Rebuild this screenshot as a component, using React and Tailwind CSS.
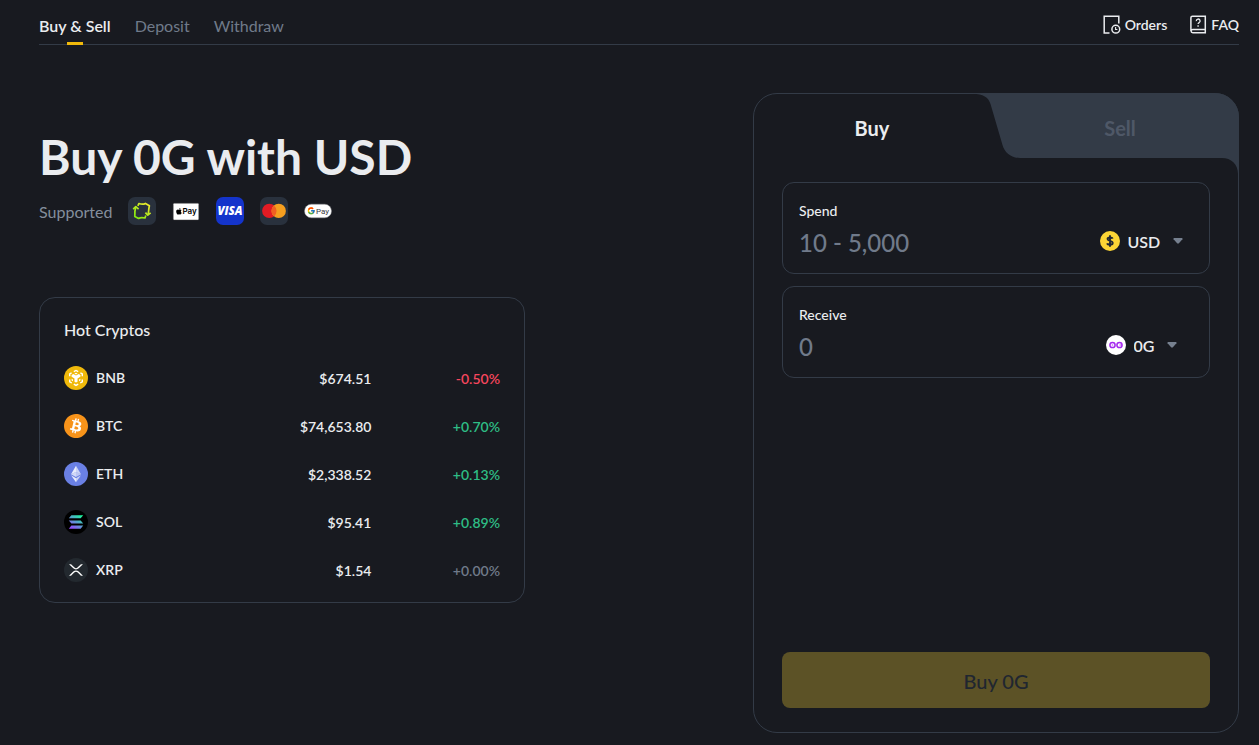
import React from 'react';
import { SiBitcoin } from 'react-icons/si';
import { FaApple } from 'react-icons/fa';
import { FcGoogle } from 'react-icons/fc';

function OrdersIcon() {
  return (
    <svg width="18" height="20" viewBox="0 0 18 20" fill="none" stroke="#EAECEF" strokeWidth="1.5" aria-hidden="true">
      <path d="M6.5 18H1.2V1.3H15.8V8.5" />
      <circle cx="12.8" cy="14.2" r="3.9" />
      <path d="M12.6 12V14.5H14.4" strokeWidth="1.1" />
    </svg>
  );
}

function FaqIcon() {
  return (
    <svg width="18" height="20" viewBox="0 0 18 20" fill="none" stroke="#EAECEF" strokeWidth="1.5" aria-hidden="true">
      <path d="M16.3 14.4H3.8A1.7 1.7 0 0 0 3.8 17.8H16.3V1.3H3.4A1.5 1.5 0 0 0 1.9 2.8V16" />
      <path d="M7.3 6.1A1.9 1.9 0 1 1 10.1 7.6C9.4 8 9.1 8.4 9.1 9.1" strokeWidth="1.3" />
      <path d="M9.1 10.3V11.7" strokeWidth="1.4" />
    </svg>
  );
}

function P2PIcon() {
  return (
    <svg width="28" height="28" viewBox="0 0 28 28" fill="none" role="img" aria-label="P2P">
      <defs>
        <linearGradient id="p2p" x1="20" y1="6" x2="8" y2="22" gradientUnits="userSpaceOnUse">
          <stop stopColor="#F2E92E" />
          <stop offset="1" stopColor="#7BE80E" />
        </linearGradient>
      </defs>
      <rect width="28" height="28" rx="7" fill="#29313D" />
      <g stroke="url(#p2p)" strokeWidth="1.7" strokeLinejoin="round">
        <path d="M9.8 8.8L11 6.5C13.5 7.5 16 7.2 17.4 6.4L21.4 8.8C20.5 12 20.8 15 20 17.8" />
        <path d="M17.4 15.6L19.8 18.2L22.6 15.8" />
        <path d="M17.8 18.6L17 21C14.5 20.4 12 20.6 10.6 21.4L6.8 19.4C6.6 16 6.8 12.8 7.8 10" />
        <path d="M5.2 12.2L7.8 9.6L10.6 12.2" />
      </g>
    </svg>
  );
}

function ApplePayIcon() {
  return (
    <svg width="28" height="28" viewBox="0 0 28 28" role="img" aria-label="Apple Pay">
      <rect x="1.2" y="6.2" width="25.6" height="16.8" rx="1" fill="#fff" stroke="#3b3b3b" strokeWidth="0.5" />
      <FaApple x="3.2" y="10.4" size="7.6" color="#000" />
      <text x="10.4" y="17" fontSize="8" fontWeight="600" fill="#000" fontFamily="Inter, sans-serif">Pay</text>
    </svg>
  );
}

function VisaIcon() {
  return (
    <svg width="28" height="28" viewBox="0 0 28 28" role="img" aria-label="Visa">
      <rect width="28" height="28" rx="7" fill="#1434CB" />
      <text x="14" y="18.2" textAnchor="middle" fontSize="11.5" fontWeight="800" fontStyle="italic" fill="#fff" fontFamily="'Open Sans', sans-serif">VISA</text>
    </svg>
  );
}

function MastercardIcon() {
  return (
    <svg width="28" height="28" viewBox="0 0 28 28" role="img" aria-label="Mastercard">
      <rect width="28" height="28" rx="7" fill="#29313D" />
      <circle cx="9.3" cy="13.9" r="7.2" fill="#E21B24" />
      <circle cx="18.7" cy="13.9" r="7.2" fill="#F59E1F" />
      <path d="M14 8.4a7.2 7.2 0 0 1 0 11a7.2 7.2 0 0 1 0-11Z" fill="#F16022" />
    </svg>
  );
}

function GooglePayIcon() {
  return (
    <svg width="28" height="28" viewBox="0 0 28 28" role="img" aria-label="Google Pay">
      <rect x="0.5" y="7.2" width="27" height="13.6" rx="6.8" fill="#fff" stroke="#8b8d91" strokeWidth="0.5" />
      <FcGoogle x="3" y="9.6" size="8.4" />
      <text x="12" y="16.8" fontSize="8" fontWeight="400" fill="#3c4043" fontFamily="Roboto, sans-serif">Pay</text>
    </svg>
  );
}

function BnbIcon() {
  return (
    <svg width="24" height="24" viewBox="0 0 24 24" fill="none" aria-hidden="true">
      <circle cx="12" cy="12" r="12" fill="#F0B90B" />
      <path d="M9.8 5.7L12 4.5L14.2 5.7M16.4 6.9L18.3 8V10.2M18.3 13.4V15.8L16.2 17M14.2 18.2L12 19.4L9.8 18.2M7.8 17L5.7 15.8V13.4M5.7 10.2V8L7.6 6.9" stroke="#fff" strokeWidth="1.4" />
      <path d="M7.6 9L9.3 8.1L12 9.6L14.7 8.1L16.4 9V10.8L13.5 12.5V15.7L12 16.6L10.5 15.7V12.5L7.6 10.8Z" fill="#fff" />
      <path d="M10.4 7.6L12 6.7L13.6 7.6L12 8.5ZM7.6 12.7L9 13.5V15.2L7.6 14.4ZM16.4 12.7L15 13.5V15.2L16.4 14.4Z" fill="#fff" />
    </svg>
  );
}

function BtcIcon() {
  return (
    <svg width="24" height="24" viewBox="0 0 24 24" aria-hidden="true">
      <circle cx="12" cy="12" r="11" fill="#fff" />
      <SiBitcoin size="24" color="#F7931A" />
    </svg>
  );
}

function EthIcon() {
  return (
    <svg width="24" height="24" viewBox="0 0 24 24" aria-hidden="true">
      <circle cx="12" cy="12" r="12" fill="#6A80E4" />
      <path d="M12 3.8V9.9L7 12.2Z" fill="#fff" fillOpacity="0.85" />
      <path d="M12 3.8V9.9L17 12.2Z" fill="#fff" fillOpacity="0.65" />
      <path d="M12 9.9V15.1L7 12.2Z" fill="#fff" fillOpacity="0.7" />
      <path d="M12 9.9V15.1L17 12.2Z" fill="#fff" fillOpacity="0.55" />
      <path d="M12 16.2V20.2L7 13.3Z" fill="#fff" fillOpacity="0.85" />
      <path d="M12 16.2V20.2L17 13.3Z" fill="#fff" fillOpacity="0.65" />
    </svg>
  );
}

function SolIcon() {
  return (
    <svg width="24" height="24" viewBox="0 0 24 24" aria-hidden="true">
      <defs>
        <linearGradient id="sol" x1="17" y1="5" x2="7" y2="19" gradientUnits="userSpaceOnUse">
          <stop stopColor="#19FB9B" />
          <stop offset="0.5" stopColor="#5B9BD0" />
          <stop offset="1" stopColor="#9945FF" />
        </linearGradient>
      </defs>
      <circle cx="12" cy="12" r="12" fill="#000" />
      <path d="M7.4 5.2H19.2L16.7 8.3H4.8ZM4.8 10.4H16.7L19.2 13.5H7.4ZM7.4 15.6H19.2L16.7 18.7H4.8Z" fill="url(#sol)" />
    </svg>
  );
}

function XrpIcon() {
  return (
    <svg width="24" height="24" viewBox="0 0 24 24" aria-hidden="true">
      <circle cx="12" cy="12" r="12" fill="#23292F" />
      <g transform="translate(5 6.2) scale(0.0273)" fill="#fff">
        <path d="M437 0h74L357 152.48c-55.77 55.19-146.19 55.19-202 0L.94 0H75l117 115.83a91.11 91.11 0 0 0 127.91 0Z" />
        <path d="M74.05 424H0l155-153.42c55.77-55.19 146.19-55.19 202 0L512 424h-74L320 307.23a91.11 91.11 0 0 0-127.91 0Z" />
      </g>
    </svg>
  );
}

function UsdIcon() {
  return (
    <svg width="20" height="20" viewBox="0 0 20 20" fill="none" aria-hidden="true">
      <circle cx="10" cy="10" r="10" fill="#FCD535" />
      <path d="M12.7 7.6C12.3 6.4 7.5 5.7 7.5 8.1C7.5 10.4 12.7 9.2 12.7 11.9C12.7 14.3 7.6 14 7.2 12.2M10 4.3V15.7" stroke="#202630" strokeWidth="1.9" />
    </svg>
  );
}

function ZeroGIcon() {
  return (
    <svg width="20" height="20" viewBox="0 0 20 20" fill="none" aria-hidden="true">
      <circle cx="10" cy="10" r="10" fill="#fff" />
      <g stroke="#A428EE" strokeWidth="1.5">
        <circle cx="6.5" cy="10" r="2.6" />
        <circle cx="13.5" cy="10" r="2.6" />
        <path d="M5.8 10H7.2M13.5 10H16" strokeWidth="0.9" />
      </g>
    </svg>
  );
}

const COINS = [
  { name: 'BNB', price: '$674.51', change: '-0.50%', tone: 'text-[#F6465D]', Icon: BnbIcon },
  { name: 'BTC', price: '$74,653.80', change: '+0.70%', tone: 'text-[#2EBD85]', Icon: BtcIcon },
  { name: 'ETH', price: '$2,338.52', change: '+0.13%', tone: 'text-[#2EBD85]', Icon: EthIcon },
  { name: 'SOL', price: '$95.41', change: '+0.89%', tone: 'text-[#2EBD85]', Icon: SolIcon },
  { name: 'XRP', price: '$1.54', change: '+0.00%', tone: 'text-[#707A8A]', Icon: XrpIcon },
];

function Header() {
  return (
    <header className="flex justify-between border-b border-[#333B47]">
      <nav className="flex gap-6 text-base">
        <a href="#buy-sell" aria-current="page" className="relative flex h-11 items-center pt-2 font-semibold">
          Buy &amp; Sell
          <span className="absolute -bottom-px left-1/2 h-[3px] w-4 -translate-x-1/2 bg-[#F0B90B]" />
        </a>
        <a href="#deposit" className="flex h-11 items-center pt-2 text-[#707A8A]">Deposit</a>
        <a href="#withdraw" className="flex h-11 items-center pt-2 text-[#707A8A]">Withdraw</a>
      </nav>
      <div className="flex gap-[22px] text-sm font-semibold">
        <a href="#orders" className="flex h-11 items-center gap-1 pt-1.5"><OrdersIcon />Orders</a>
        <a href="#faq" className="flex h-11 items-center gap-1 pt-1.5"><FaqIcon />FAQ</a>
      </div>
    </header>
  );
}

function HotCryptos() {
  return (
    <section className="mt-18 rounded-2xl border border-[#333B47] px-6 pt-5 pb-2">
      <h2 className="mb-3 text-base leading-6 font-medium">Hot Cryptos</h2>
      <table className="w-full table-fixed text-sm font-semibold">
        <tbody>
          {COINS.map(({ name, price, change, tone, Icon }) => (
            <tr key={name} className="h-12">
              <th scope="row" className="w-[41%] p-0 text-left font-semibold">
                <span className="flex items-center gap-2"><Icon />{name}</span>
              </th>
              <td className="p-0 pt-0.5 text-right">{price}</td>
              <td className={`p-0 pt-0.5 text-right ${tone}`}>{change}</td>
            </tr>
          ))}
        </tbody>
      </table>
    </section>
  );
}

function AmountField({ id, label, placeholder, currency, Icon }) {
  return (
    <div className="flex items-end rounded-xl border border-[#333B47] pt-4 pb-3.5 pl-4">
      <div className="min-w-0 flex-1">
        <label htmlFor={id} className="block text-sm leading-6 font-medium">{label}</label>
        <input id={id} type="text" inputMode="decimal" placeholder={placeholder} className="mt-1 block h-8 w-full bg-transparent text-2xl font-medium outline-none placeholder:text-[#707A8A]" />
      </div>
      <div className="flex h-9 w-[136px] items-center justify-center text-base font-semibold">
        <Icon />
        <select aria-label={`${label} currency`} defaultValue={currency} className="ml-2 appearance-none bg-transparent pt-0.5 outline-none">
          <option>{currency}</option>
        </select>
        <svg width="10" height="6" viewBox="0 0 10 6" className="ml-3" aria-hidden="true">
          <path d="M0.6 0H9.4V1.2L5.7 5.4H4.3L0.6 1.2Z" fill="#76808F" />
        </svg>
      </div>
    </div>
  );
}

function TradePanel() {
  return (
    <section className="relative flex min-h-[640px] w-[40.5%] flex-col rounded-3xl border border-[#333B47]">
      <svg width="266" height="81" viewBox="0 0 266 81" className="absolute -top-px -right-px" aria-hidden="true">
        <path d="M0 0H242A24 24 0 0 1 266 24V81H265C265 71 258 65 249 65H47C38 65 31.5 59.5 29.5 52L17.5 11C15.5 4.5 10 0.8 0 0.8Z" fill="#333B47" />
      </svg>
      <div role="tablist" className="relative flex h-17 gap-3 text-xl">
        <button type="button" role="tab" aria-selected="true" className="flex-1 font-bold">Buy</button>
        <button type="button" role="tab" aria-selected="false" className="flex-1 font-bold text-[#4F5867]">Sell</button>
      </div>
      <form className="flex flex-1 flex-col gap-3 px-7 pt-5 pb-6" onSubmit={(e) => e.preventDefault()}>
        <AmountField id="spend" label="Spend" placeholder="10 - 5,000" currency="USD" Icon={UsdIcon} />
        <AmountField id="receive" label="Receive" placeholder="0" currency="0G" Icon={ZeroGIcon} />
        <button type="submit" disabled className="mt-auto h-14 rounded-lg bg-[#5C5226] pt-0.5 text-xl font-medium text-[#202630]">Buy 0G</button>
      </form>
    </section>
  );
}

export default function App() {
  return (
    <div className="min-h-screen bg-[#181A20] pr-5 pb-3 pl-[39px] font-['Lato','Open_Sans',sans-serif] text-[#EAECEF]">
      <Header />
      <main className="mt-12 flex items-start justify-between">
        <div className="w-[40.5%] pt-8">
          <h1 className="text-5xl leading-[64px] font-bold whitespace-nowrap">Buy 0G with USD</h1>
          <div className="mt-2 flex items-center gap-4">
            <span className="pt-0.5 text-base text-[#848E9C]">Supported</span>
            <P2PIcon />
            <ApplePayIcon />
            <VisaIcon />
            <MastercardIcon />
            <GooglePayIcon />
          </div>
          <HotCryptos />
        </div>
        <TradePanel />
      </main>
    </div>
  );
}
